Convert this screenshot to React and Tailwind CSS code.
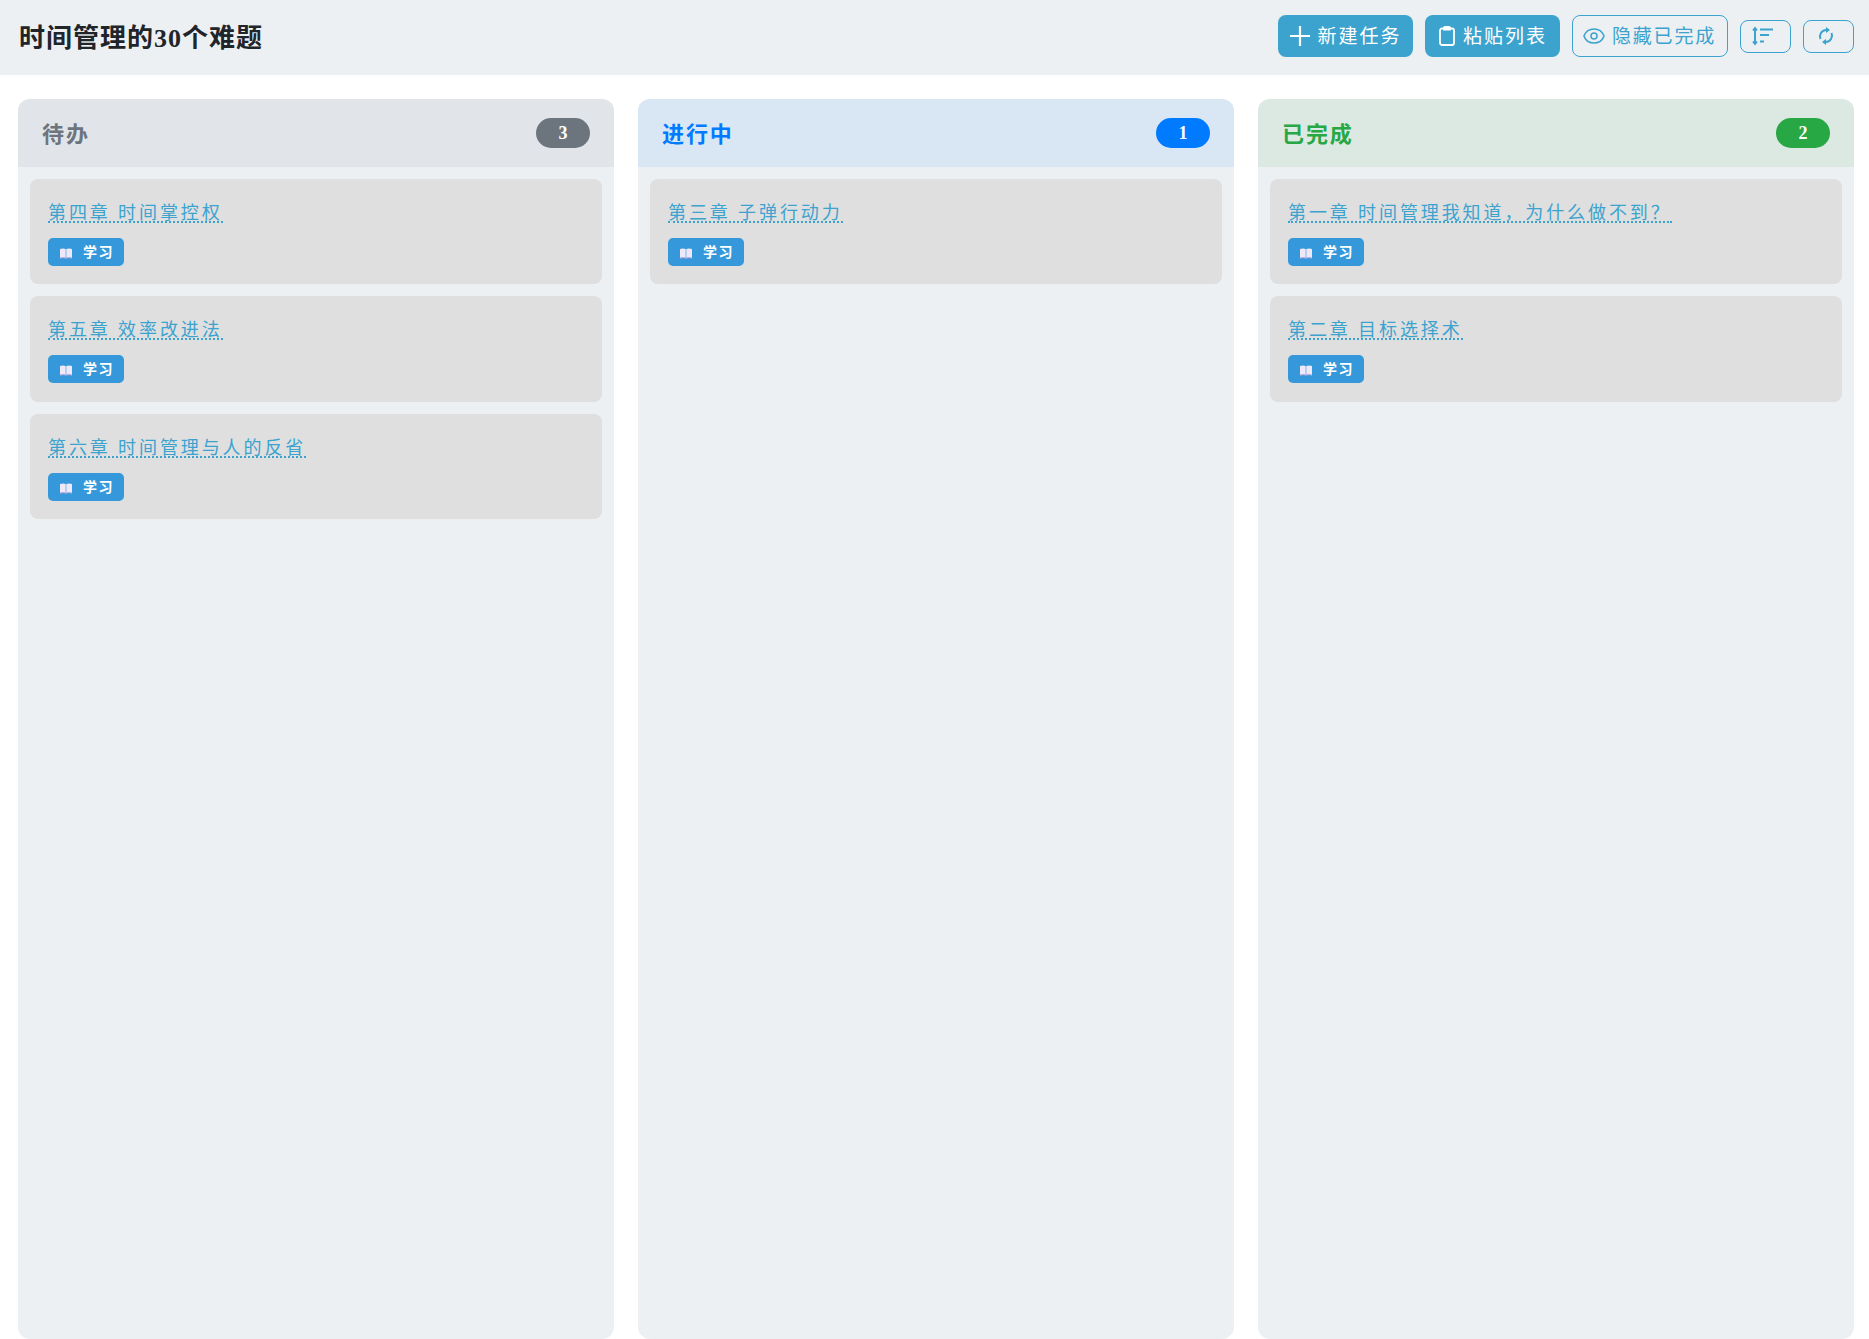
import { Eye } from 'lucide-react'

const columns = [
  { title: '待办', count: 3, head: 'bg-[#e1e4e8]', text: 'text-[#6c757d]', badge: 'bg-[#6c757d]', tasks: ['第四章 时间掌控权', '第五章 效率改进法', '第六章 时间管理与人的反省'] },
  { title: '进行中', count: 1, head: 'bg-[#d9e6f4]', text: 'text-[#007bff]', badge: 'bg-[#007bff]', tasks: ['第三章 子弹行动力'] },
  { title: '已完成', count: 2, head: 'bg-[#dce9e2]', text: 'text-[#28a745]', badge: 'bg-[#28a745]', tasks: ['第一章 时间管理我知道，为什么做不到？', '第二章 目标选择术'] },
]

function BookIcon() {
  return (
    <svg width="14" height="12" viewBox="0 0 14 12" className="mt-[2px]">
      <path d="M1 2c2-.8 4-.8 5.700 0v9C5 10.300 3 10.300 1 11z" fill="#eee8f8" />
      <path d="M7.300 2c1.700-.8 3.700-.8 5.700 0v9c-2-.7-4-.7-5.700 0z" fill="#eee8f8" />
      <path d="M1 11.200c2-.7 4-.7 6 0 2-.7 4-.7 6 0" stroke="#b9a8e0" fill="none" />
    </svg>
  )
}

function TaskCard({ title }) {
  return (
    <div className="h-[105.4px] rounded-lg bg-[#dfdfdf] pl-[18px] pt-[22px]">
      <a className="block h-[22px] w-fit border-b-2 border-dotted border-[#3ca3cf] text-[18px] leading-[24px] tracking-[2.900px] text-[#3ca3cf]">{title}</a>
      <div className="mt-[15px] flex h-[28px] w-[76px] items-center gap-[10px] rounded-[5px] bg-[#3498db] pl-[11px] text-[14px] font-bold text-white">
        <BookIcon />
        <span className="pt-[1px] tracking-[1.500px]">学习</span>
      </div>
    </div>
  )
}

function Column({ col }) {
  return (
    <div className="flex w-[596px] flex-col overflow-hidden rounded-xl bg-[#edf0f3]">
      <div className={`flex h-[68px] items-center justify-between pl-[24px] pr-6 ${col.head}`}>
        <h2 className={`pt-[2px] text-[22px] font-bold tracking-[1.900px] ${col.text}`}>{col.title}</h2>
        <span className={`flex h-[30px] w-[54px] items-center justify-center rounded-full pt-[1px] text-[18px] font-bold text-white ${col.badge}`}>{col.count}</span>
      </div>
      <div className="flex flex-col gap-3 p-3">
        {col.tasks.map(t => <TaskCard key={t} title={t} />)}
      </div>
    </div>
  )
}

export default function App() {
  return (
    <div className="h-[1339px] overflow-hidden bg-white text-[#212529] [font-family:'Liberation_Serif','Noto_Sans_CJK_SC',serif]">
      <header className="flex h-[75px] items-center justify-between bg-[#edf0f3] pl-[19px] pr-[15px]">
        <h1 className="pt-[2px] text-[26px] font-bold tracking-[1px]">时间管理的30个难题</h1>
        <div className="mb-[3px] flex items-center gap-3">
          <button className="flex h-[42px] w-[135px] items-center gap-[1.500px] rounded-lg bg-[#3ca3cf] pl-[6px] text-[19px] tracking-[2px] text-white">
            <svg width="32" height="32" viewBox="0 0 32 32" fill="none" stroke="currentColor" strokeWidth="2.200"><path d="M6 16h20M16 6v20" /></svg>
            <span className="pt-[3px]">新建任务</span>
          </button>
          <button className="flex h-[42px] w-[135px] items-center gap-[8px] rounded-lg bg-[#3ca3cf] pl-[14px] text-[19px] tracking-[2px] text-white">
            <svg width="16" height="21" viewBox="0 0 16 21" fill="none" stroke="currentColor" strokeWidth="1.800" className="-mt-[1px]"><rect x="1" y="3.500" width="14" height="16.500" rx="2" /><path d="M5 4.500h6V3a1 1 0 0 0-1-1H6a1 1 0 0 0-1 1z" fill="currentColor" /></svg>
            <span className="pt-[3px]">粘贴列表</span>
          </button>
          <button className="flex h-[42px] w-[156px] items-center gap-[6px] rounded-lg border border-[#3ca3cf] pl-[9px] text-[19px] tracking-[1.800px] text-[#3ca3cf]">
            <Eye size={24} strokeWidth={1.500} />
            <span className="pt-[3px]">隐藏已完成</span>
          </button>
          <button className="flex h-[33px] w-[51px] items-center rounded-lg border border-[#3ca3cf] pl-[9px] text-[#3ca3cf]">
            <svg width="24" height="22" viewBox="0 0 24 22" fill="none" stroke="currentColor" strokeWidth="2"><path d="M5 3v16M3 5.500l2-2.500 2 2.500M3 16.500l2 2.500 2-2.500M10 4.500h13M10 10h9M10 16.500h4" /></svg>
          </button>
          <button className="flex h-[33px] w-[51px] items-center rounded-lg border border-[#3ca3cf] pl-[14px] text-[#3ca3cf]">
            <svg width="16" height="20" viewBox="0 0 16 20" fill="none" stroke="currentColor" strokeWidth="2">
              <path d="M2.500 13A6.500 6.500 0 0 1 8 4M13.500 7A6.500 6.500 0 0 1 8 16" />
              <path d="M8 1l4 3-4 3zM8 13l-4 3 4 3z" fill="currentColor" stroke="none" />
            </svg>
          </button>
        </div>
      </header>
      <main className="flex h-[1264px] gap-6 pl-[18px] pr-[15px] pt-6">
        {columns.map(c => <Column key={c.title} col={c} />)}
      </main>
    </div>
  )
}
